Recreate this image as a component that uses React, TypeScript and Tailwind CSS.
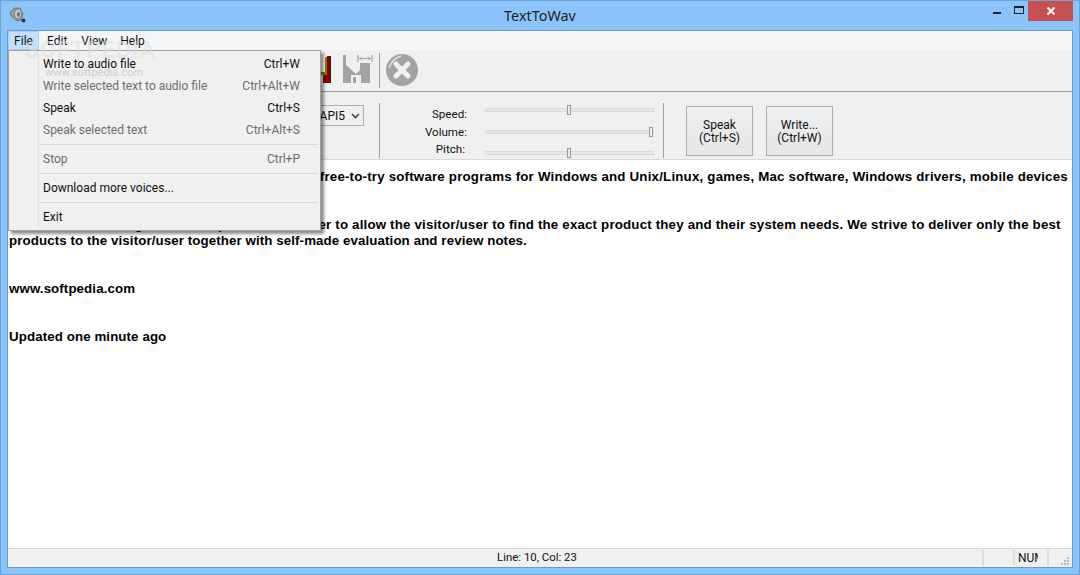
const menuItems = [
  { label: "Write to audio file", keys: "Ctrl+W" },
  { label: "Write selected text to audio file", keys: "Ctrl+Alt+W", disabled: true },
  { label: "Speak", keys: "Ctrl+S" },
  { label: "Speak selected text", keys: "Ctrl+Alt+S", disabled: true },
  { sep: true },
  { label: "Stop", keys: "Ctrl+P", disabled: true },
  { sep: true },
  { label: "Download more voices..." },
  { sep: true },
  { label: "Exit" },
];

const editorLines = [
  "Softpedia is a library of over 1,300,000 free and free-to-try software programs for Windows and Unix/Linux, games, Mac software, Windows drivers, mobile devices",
  "and IT-related articles.",
  "",
  "We review and categorize these products in order to allow the visitor/user to find the exact product they and their system needs. We strive to deliver only the best",
  "products to the visitor/user together with self-made evaluation and review notes.",
  "",
  "",
  "www.softpedia.com",
  "",
  "",
  "Updated one minute ago",
];

function SpeakerIcon() {
  return (
    <svg width="18" height="18" viewBox="0 0 18 18">
      <path d="M1 6 L6 2 L11 2 L14 8 L12 14 L8 15 L2 10 Z" fill="#9a9a9a" stroke="#6b6b6b" strokeWidth="0.8" />
      <ellipse cx="9" cy="8" rx="3.6" ry="5" fill="#c4c4c4" stroke="#777" strokeWidth="0.8" />
      <ellipse cx="9.5" cy="8.5" rx="1.6" ry="2.4" fill="#777" />
      <circle cx="14.5" cy="14.5" r="2" fill="#333" />
    </svg>
  );
}

function SaveIcon() {
  return (
    <svg width="31" height="30" viewBox="0 0 31 30">
      <path d="M1 1 H4 V11 L14 20 L18 16 V9 H28 V29 H1 Z" fill="#a3a3a3" />
      <rect x="9" y="21" width="10" height="8" fill="#f0f0f0" />
      <rect x="11" y="23" width="3" height="6" fill="#a3a3a3" />
      <path d="M16 1 V8 M30 1 V8 M17 4.5 H29" stroke="#a3a3a3" strokeWidth="1.2" fill="none" />
      <path d="M20 2.5 L18 4.5 L20 6.5 M26 2.5 L28 4.5 L26 6.5" stroke="#a3a3a3" strokeWidth="1" fill="none" />
    </svg>
  );
}

function StopIcon() {
  return (
    <svg width="34" height="34" viewBox="0 0 34 34">
      <circle cx="17" cy="17" r="16" fill="#a3a3a3" />
      <path d="M4 15 C6 9 10 5 16 3" stroke="#e0e0e0" strokeWidth="1.4" fill="none" />
      <path d="M11 11 L23 23 M23 11 L11 23" stroke="#f0f0f0" strokeWidth="5" strokeLinecap="round" />
    </svg>
  );
}

function WriteIcon() {
  return (
    <svg width="32" height="32" viewBox="0 0 32 32">
      <rect x="0" y="1" width="29" height="18" fill="#fff" />
      <rect x="28" y="1" width="4" height="27" fill="#8b0000" />
      <rect x="24" y="20" width="5" height="8" fill="#8b0000" />
      <rect x="26" y="2" width="2" height="18" fill="#808000" />
      <rect x="18" y="17" width="10" height="3" fill="#808000" />
      <rect x="31" y="1" width="1" height="27" fill="#222" />
    </svg>
  );
}

function Slider({ value }: { value: number }) {
  return (
    <div className="relative h-[4px] w-[169px] border border-[#d8dcd8] bg-[#e6e8e6]">
      <div
        className="absolute top-[-4px] h-[10px] w-[4px] border border-[#9a9a9a] bg-[#ececec]"
        style={{ left: value }}
      />
    </div>
  );
}

function ActionButton({ top, bottom }: { top: string; bottom: string }) {
  return (
    <button className="flex h-[50px] w-[67px] flex-col items-center justify-center border border-[#adadad] bg-gradient-to-b from-[#f0f0f0] to-[#e5e5e5] pt-[2px] text-[12px] leading-[13px] text-[#111]">
      <span>{top}</span>
      <span>{bottom}</span>
    </button>
  );
}

export default function App() {
  return (
    <div className="relative flex h-[575px] w-[1080px] flex-col overflow-hidden bg-[#8ac4fa] px-[7px] pb-[7px] font-['Roboto',sans-serif] text-[12px] text-[#111] shadow-[inset_0_0_0_1px_#6aa5d8]">
      {/* Title bar */}
      <div className="grid h-[30px] shrink-0 grid-cols-3 items-start">
        <div className="pl-[2px] pt-[6px]">
          <SpeakerIcon />
        </div>
        <div className="justify-self-center pt-[7px] font-['Noto_Sans',sans-serif] text-[14.4px] leading-[18px] text-[#222]">TextToWav</div>
        <div className="flex items-start justify-self-end">
          <div className="flex h-[20px] w-[26px] items-center justify-center">
            <div className="mt-[5px] h-[2px] w-[8px] bg-[#222]" />
          </div>
          <div className="flex h-[20px] w-[18px] items-center justify-center">
            <div className="h-[8px] w-[10px] border border-t-2 border-[#222]" />
          </div>
          <div className="mt-[1px] flex h-[20px] w-[45px] items-center justify-center bg-[#c75050] text-white">
            <svg width="10" height="10" viewBox="0 0 10 10">
              <path d="M1.5 1.5 L8.5 8.5 M8.5 1.5 L1.5 8.5" stroke="#fff" strokeWidth="2" />
            </svg>
          </div>
        </div>
      </div>

      <div className="flex min-h-0 flex-1 flex-col border border-[#6f9bc4]">
        {/* Menu bar */}
        <div className="flex h-[19px] shrink-0 items-center bg-[#f5f6f7]">
          <div className="flex h-[19px] w-[31px] items-center justify-center border border-[#a8cdf0] bg-[#c4e0fc]">File</div>
          <div className="ml-[8px]">Edit</div>
          <div className="ml-[14px]">View</div>
          <div className="ml-[13px]">Help</div>
        </div>

        {/* Toolbar */}
        <div className="flex h-[42px] shrink-0 items-start border-b border-[#a0a0a0] bg-[#f0f0f0] pl-[291px] pt-[3px]">
          <div className="mt-[2px]"><WriteIcon /></div>
          <div className="ml-[11px] mt-[1px]"><SaveIcon /></div>
          <div className="ml-[6px] h-[35px] w-[1px] bg-[#a0a0a0]" />
          <div className="ml-[5px]"><StopIcon /></div>
        </div>

        {/* Voice settings */}
        <div className="flex h-[67px] shrink-0 items-start bg-[#f0f0f0]">
          <div className="mt-[13px] flex h-[21px] w-[356px] items-center justify-end gap-[6px] border border-[#adadad] pr-[3px] text-[12px]">
            <span>API5</span>
            <svg width="9" height="6" viewBox="0 0 9 6">
              <path d="M1 1 L4.5 4.5 L8 1" stroke="#444" strokeWidth="1.6" fill="none" />
            </svg>
          </div>
          <div className="ml-[15px] mt-[11px] h-[55px] w-[1px] bg-[#a0a0a0]" />
          <div className="ml-[50px] mt-[14px] flex w-[37px] flex-col items-end text-[11.6px] leading-[16px]">
            <span className="h-[18px] whitespace-nowrap">Speed:</span>
            <span className="h-[17px] whitespace-nowrap">Volume:</span>
            <span className="mr-[2px] h-[16px] whitespace-nowrap">Pitch:</span>
          </div>
          <div className="ml-[18px] mt-[16px] flex flex-col">
            <Slider value={81} />
            <div className="h-[18px]" />
            <Slider value={163} />
            <div className="h-[17px]" />
            <Slider value={81} />
          </div>
          <div className="ml-[9px] mt-[11px] h-[55px] w-[1px] bg-[#a0a0a0]" />
          <div className="ml-[22px] mt-[14px] flex gap-[13px]">
            <ActionButton top="Speak" bottom="(Ctrl+S)" />
            <ActionButton top="Write..." bottom="(Ctrl+W)" />
          </div>
        </div>

        {/* Editor */}
        <div className="min-h-0 flex-1 overflow-hidden border-t border-[#d8d8d8] bg-white pl-[1px] pt-[9px] font-['Liberation_Sans',sans-serif] text-[13.3px] font-bold leading-[16px] text-black">
          {editorLines.map((line, i) => (
            <div
              key={i}
              className={`h-[16px] whitespace-nowrap ${i === 0 ? "tracking-[0.2px]" : i === 3 ? "tracking-[0.18px]" : "tracking-[0.1px]"}`}
            >
              {line}
            </div>
          ))}
        </div>

        {/* Status bar */}
        <div className="flex h-[19px] shrink-0 items-center border-t border-[#d8d8d8] bg-[#f0f0f0] text-[11.4px]">
          <div className="flex-1 pl-[84px] text-center">Line: 10, Col: 23</div>
          <div className="h-[16px] w-[31px] border-l-2 border-[#dcdcdc]" />
          <div className="flex h-[16px] w-[36px] border-l-2 border-r-2 border-[#dcdcdc] pl-[3px] text-[12px]">
            <div className="w-[20px] overflow-hidden leading-[16px]">NUM</div>
          </div>
          <div className="w-[23px]" />
        </div>
      </div>

      {/* File menu */}
      <div className="absolute left-[8px] top-[50px] h-[181px] w-[313px] border border-[#a0a0a0] bg-[#f0f0f0] pb-[1px] pl-[1px] pr-[20px] pt-[2px] shadow-[3px_3px_3px_rgba(0,0,0,0.45)]">
        <div className="absolute bottom-[3px] left-[29px] top-[3px] w-[1px] bg-[#e0e0e0]" />
        {menuItems.map((item, i) =>
          item.sep ? (
            <div key={i} className="my-[3px] ml-[30px] mr-[-18px] h-[1px] bg-[#d8d8d8]" />
          ) : (
            <div
              key={i}
              className={`flex h-[22px] items-center justify-between pl-[33px] ${item.disabled ? "text-[#6d6d6d]" : "text-[#111]"}`}
            >
              <span>{item.label}</span>
              <span>{item.keys}</span>
            </div>
          )
        )}
      </div>

      {/* Watermark */}
      <div className="pointer-events-none absolute left-[25px] top-[38px] text-[23px] font-bold leading-[26px] tracking-[1px] text-[#dcdcdc]/50">SOFTPEDIA</div>
      <div className="pointer-events-none absolute left-[45px] top-[66px] text-[11px] leading-[13px] text-[#cfcfcf]">www.softpedia.com</div>

      {/* Resize grip */}
      <div className="absolute bottom-[9px] right-[10px] h-[10px] w-[10px]">
        <svg width="10" height="10" viewBox="0 0 10 10">
          <path d="M7 1h2v2H7zM4 4h2v2H4zM7 4h2v2H7zM1 7h2v2H1zM4 7h2v2H4zM7 7h2v2H7z" fill="#b8b8b8" />
        </svg>
      </div>
    </div>
  );
}
